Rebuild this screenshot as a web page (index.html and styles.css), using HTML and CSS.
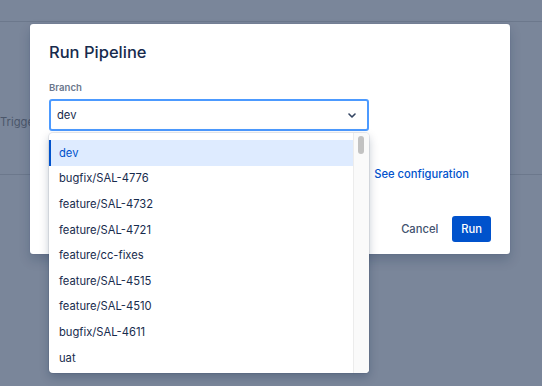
FILE: index.html
```html
<!DOCTYPE html>
<html>
<head>
    <title>Run Pipeline</title>
    <link rel="stylesheet" href="styles.css">
</head>
<body>

    <div class="page">
        <div class="page-header"></div>
        <div class="page-section">
            <span class="trigger-text">Triggered by</span>
        </div>
    </div>

    <div class="modal">
        <h2 class="modal-title">Run Pipeline</h2>

        <label class="field-label">Branch</label>
        <div class="select">
            <span>dev</span>
            <svg class="chevron" width="8" height="5" viewBox="0 0 8 5">
                <path d="M1 1 L4 4 L7 1" fill="none" stroke="#344563" stroke-width="1.6" stroke-linecap="round" stroke-linejoin="round"/>
            </svg>
        </div>

        <div class="config-row">
            <a class="link" href="#">See configuration</a>
        </div>

        <div class="modal-footer">
            <button class="btn btn-subtle">Cancel</button>
            <button class="btn btn-primary">Run</button>
        </div>
    </div>

    <div class="menu">
        <ul class="menu-list">
            <li class="menu-item selected">dev</li>
            <li class="menu-item">bugfix/SAL-4776</li>
            <li class="menu-item">feature/SAL-4732</li>
            <li class="menu-item">feature/SAL-4721</li>
            <li class="menu-item">feature/cc-fixes</li>
            <li class="menu-item">feature/SAL-4515</li>
            <li class="menu-item">feature/SAL-4510</li>
            <li class="menu-item">bugfix/SAL-4611</li>
            <li class="menu-item">uat</li>
        </ul>
        <div class="scrollbar">
            <div class="scroll-thumb"></div>
        </div>
    </div>

</body>
</html>
```

FILE: styles.css
```css
body {
    margin: 0;
    background-color: #7a869a;
    font-family: Inter, "Noto Sans", sans-serif;
    color: #172b4d;
    overflow: hidden;
}

.page {
    height: 386px;
}

.page-header {
    height: 21px;
    border-bottom: 1px solid #6c788c;
}

.page-section {
    height: 152px;
    border-bottom: 1px solid #6c788c;
    display: flex;
    align-items: center;
}

.trigger-text {
    width: 30px;
    overflow: hidden;
    white-space: nowrap;
    margin-top: 48px;
    font-size: 11.2px;
    color: #4b566a;
}

.modal {
    position: absolute;
    left: 30px;
    top: 24px;
    width: 480px;
    height: 230px;
    box-sizing: border-box;
    padding: 0 19px 0 19px;
    background: #fff;
    border-radius: 3px;
    box-shadow: 0 0 1px rgba(9, 30, 66, 0.3), 0 6px 12px rgba(9, 30, 66, 0.2);
}

.modal-title {
    margin: 0;
    padding-top: 16px;
    font-size: 16.5px;
    line-height: 24px;
    font-weight: 500;
    color: #172b4d;
}

.field-label {
    display: block;
    margin-top: 17px;
    font-size: 9.6px;
    line-height: 14px;
    font-weight: 600;
    color: #6b778c;
}

.select {
    margin-top: 4px;
    width: 320px;
    height: 32px;
    box-sizing: border-box;
    border: 2px solid #4c9aff;
    border-radius: 3px;
    display: flex;
    align-items: center;
    justify-content: space-between;
    padding: 0 11px 0 6px;
    font-size: 11.2px;
}

.config-row {
    margin-top: 35px;
    height: 16px;
    display: flex;
    justify-content: flex-end;
    padding-right: 22px;
}

.link {
    font-size: 11.2px;
    line-height: 16px;
    font-weight: 500;
    color: #0052cc;
    text-decoration: none;
}

.modal-footer {
    margin-top: 34px;
    display: flex;
    justify-content: flex-end;
    gap: 5px;
}

.btn {
    height: 25.6px;
    border: none;
    border-radius: 3px;
    padding: 0 9px;
    font-family: inherit;
    font-size: 11.2px;
    font-weight: 500;
}

.btn-subtle {
    background: none;
    color: #42526e;
}

.btn-primary {
    background: #0052cc;
    color: #fff;
}

.menu {
    position: absolute;
    left: 49px;
    top: 133px;
    width: 320px;
    height: 240px;
    background: #fff;
    border-radius: 4px;
    overflow: hidden;
    display: flex;
    box-shadow: 0 0 0 1px rgba(9, 30, 66, 0.08), 0 4px 10px rgba(9, 30, 66, 0.25);
}

.menu-list {
    flex: 1;
    margin: 0;
    padding: 7px 0 0 0;
    list-style: none;
}

.menu-item {
    height: 25.6px;
    display: flex;
    align-items: center;
    padding-left: 10px;
    font-size: 11.2px;
    color: #172b4d;
}

.menu-item.selected {
    background: #deebff;
    color: #0052cc;
    box-shadow: inset 2px 0 0 #0052cc;
}

.scrollbar {
    width: 15px;
    border-left: 1px solid #ececec;
    background: #fafafa;
}

.scroll-thumb {
    width: 6px;
    height: 18px;
    margin: 3px 0 0 4px;
    border-radius: 3px;
    background: #c2c2c2;
}
```
